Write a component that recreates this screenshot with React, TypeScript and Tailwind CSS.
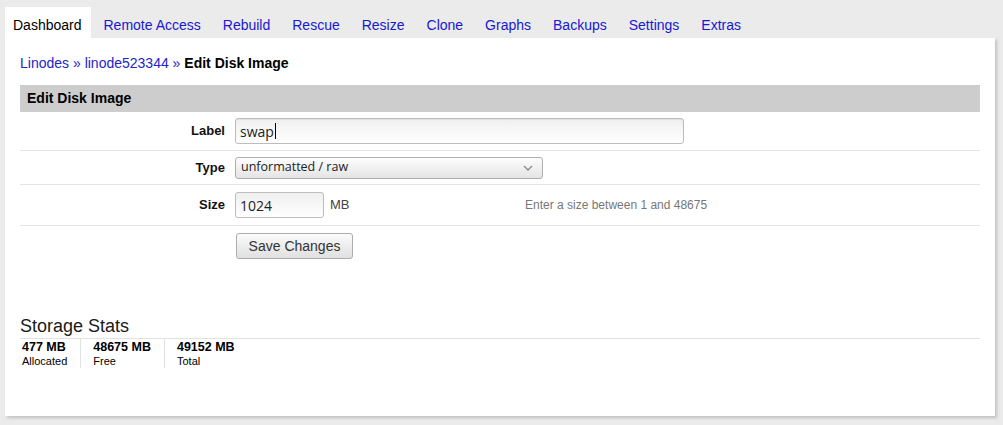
const TABS = ["Dashboard", "Remote Access", "Rebuild", "Rescue", "Resize", "Clone", "Graphs", "Backups", "Settings", "Extras"];

const STATS = [
  { value: "477 MB", label: "Allocated" },
  { value: "48675 MB", label: "Free" },
  { value: "49152 MB", label: "Total" },
];

function FieldLabel({ children }: { children?: React.ReactNode }) {
  return <div className="w-[205px] shrink-0 text-right text-[13px] font-bold text-[#111]">{children}</div>;
}

export default function App() {
  return (
    <div className="min-h-[425px] bg-[#ebebeb] pl-[5px] pr-[8px] pt-[7px] font-['Liberation_Sans',Arial,sans-serif]">
      {/* tabs */}
      <div className="flex h-[31px]">
        {TABS.map((t, i) => (
          <a
            key={t}
            href="#"
            className={`mr-[5px] pl-[8px] pr-[9px] pt-[10px] text-[14px] leading-[16px] ${
              i === 0 ? "bg-white text-black" : "text-[#1818d2]"
            }`}
          >
            {t}
          </a>
        ))}
      </div>

      {/* panel */}
      <div className="bg-white px-[15px] pb-[48px] pt-[16px] shadow-[2px_2px_3px_rgba(0,0,0,0.18)]">
        <div className="text-[14px] leading-[18px]">
          <a href="#" className="text-[#2424cc]">Linodes</a>
          <span className="text-[#2424cc]"> » </span>
          <a href="#" className="text-[#2424cc]">linode523344</a>
          <span className="text-[#2424cc]"> » </span>
          <span className="font-bold text-black">Edit Disk Image</span>
        </div>

        <div className="mt-[13px] h-[27px] bg-[#cdcdcd] px-[7px] text-[14px] font-bold leading-[27px] text-black">
          Edit Disk Image
        </div>

        {/* form */}
        <div className="flex h-[39px] items-center gap-[10px] border-b border-[#e4e4e4]">
          <FieldLabel>Label</FieldLabel>
          <div className="flex h-[26px] w-[449px] items-center rounded-[3px] border border-[#bcbcbc] bg-gradient-to-b from-[#efefef] to-white px-[4px] font-['Open_Sans',sans-serif] text-[14px] text-[#222] shadow-[inset_0_1px_1px_rgba(0,0,0,0.06)]">
            swap
            <span className="ml-[1px] h-[16px] border-l border-black" />
          </div>
        </div>

        <div className="flex h-[34px] items-center gap-[10px] border-b border-[#e4e4e4]">
          <FieldLabel>Type</FieldLabel>
          <div className="flex h-[22px] w-[308px] items-center justify-between rounded-[3px] border border-[#aeaeae] bg-gradient-to-b from-[#fdfdfd] to-[#e4e4e4] pl-[5px] pr-[9px] font-['Open_Sans',sans-serif] text-[12.5px] text-[#222]">
            unformatted / raw
            <svg width="10" height="6" viewBox="0 0 10 6" fill="none">
              <polyline points="1,1 5,5 9,1" stroke="#8a8a8a" strokeWidth="1.3" />
            </svg>
          </div>
        </div>

        <div className="flex h-[41px] items-center gap-[10px] border-b border-[#e4e4e4]">
          <FieldLabel>Size</FieldLabel>
          <div className="flex w-[280px] items-center">
            <div className="flex h-[26px] w-[89px] items-center rounded-[3px] border border-[#bcbcbc] bg-gradient-to-b from-[#efefef] to-white px-[4px] font-['Open_Sans',sans-serif] text-[14px] text-[#222]">
              1024
            </div>
            <span className="ml-[6px] text-[13px] text-[#444]">MB</span>
          </div>
          <span className="text-[12px] text-[#777]">Enter a size between 1 and 48675</span>
        </div>

        <div className="flex h-[40px] items-center gap-[10px]">
          <FieldLabel />
          <button className="ml-[1px] h-[26px] w-[117px] rounded-[3px] border border-[#acacac] bg-gradient-to-b from-[#fbfbfb] to-[#e0e0e0] text-[14px] text-[#333]">
            Save Changes
          </button>
        </div>

        {/* storage stats */}
        <div className="mt-[50px] border-b border-[#e2e2e2] pb-[1px] text-[18px] leading-[21px] text-[#1a1a1a]">
          Storage Stats
        </div>
        <div className="flex">
          {STATS.map((s, i) => (
            <div
              key={s.label}
              className={`pr-[13px] leading-[14px] text-black ${i === 0 ? "pl-[2px]" : "pl-[12px]"} ${
                i < STATS.length - 1 ? "border-r border-[#e2e2e2]" : ""
              }`}
            >
              <div className="pt-px text-[12.5px] font-bold">{s.value}</div>
              <div className="text-[11px]">{s.label}</div>
            </div>
          ))}
        </div>
      </div>
    </div>
  );
}
